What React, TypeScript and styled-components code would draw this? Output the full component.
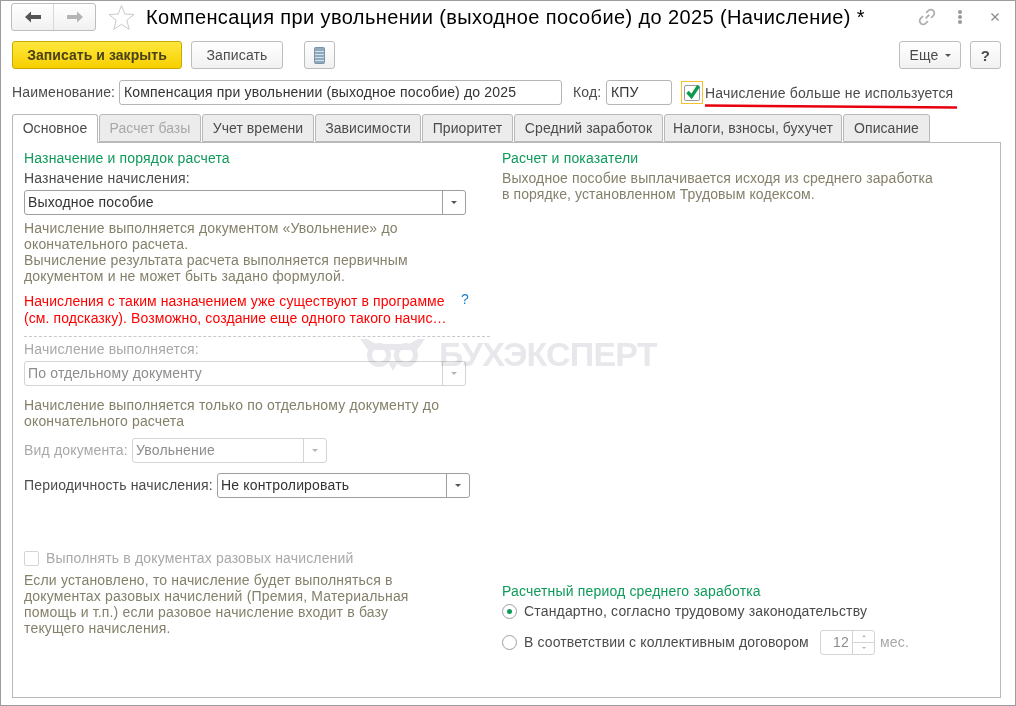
import React from "react";
import styled, { createGlobalStyle } from "styled-components";

const GlobalStyle = createGlobalStyle`
  html, body {
    margin: 0;
    padding: 0;
    background: #fff;
  }
  body {
    font-family: "Liberation Sans", Arial, sans-serif;
    font-size: 14px;
    letter-spacing: 0.17px;
    color: #4b4b4b;
  }
`;

const Window = styled.div`
  position: relative;
  box-sizing: border-box;
  width: 1016px;
  height: 706px;
  padding: 2px 13px 7px 10px;
  background: #fff;
  border: 1px solid #9c9c9c;
  overflow: hidden;
  display: flex;
  flex-direction: column;
`;

const TitleRow = styled.div`
  display: flex;
  align-items: center;
  height: 28px;
`;

const NavGroup = styled.div`
  display: flex;
  width: 85px;
  height: 28px;
  box-sizing: border-box;
  border: 1px solid #bdbdbd;
  border-radius: 3px;
  background: linear-gradient(#fff, #f1f1f1);
`;

const NavCell = styled.div<{ $divider?: boolean }>`
  flex: 1;
  display: flex;
  align-items: center;
  justify-content: center;
  border-left: ${({ $divider }) => ($divider ? "1px solid #d9d9d9" : "0")};
`;

const StarIcon = styled.svg`
  margin-left: 12px;
  flex: none;
`;

const Title = styled.h1`
  margin: 0 0 0 11px;
  flex: 1;
  font-size: 20px;
  font-weight: 400;
  letter-spacing: 0.39px;
  color: #000;
  white-space: nowrap;
  line-height: 28px;
`;

const WindowTools = styled.div`
  display: flex;
  align-items: center;
  padding-right: 2px;
`;

const LinkIcon = styled.svg`
  flex: none;
`;

const DotsIcon = styled.svg`
  flex: none;
  margin-left: 21px;
`;

const CloseIcon = styled.svg`
  flex: none;
  margin-left: 27px;
`;

const Toolbar = styled.div`
  display: flex;
  align-items: center;
  height: 28px;
  margin: 10px 1px 0 1px;
`;

const Button = styled.button<{ $width: number; $primary?: boolean; $gap?: number }>`
  box-sizing: border-box;
  width: ${({ $width }) => $width}px;
  height: 28px;
  margin-left: ${({ $gap }) => $gap ?? 0}px;
  padding: 0;
  display: flex;
  align-items: center;
  justify-content: center;
  gap: 6px;
  font-family: inherit;
  font-size: 14px;
  letter-spacing: ${({ $primary }) => ($primary ? "0.05px" : "0.17px")};
  font-weight: ${({ $primary }) => ($primary ? 700 : 400)};
  color: ${({ $primary }) => ($primary ? "#4a4218" : "#4b4b4b")};
  border: 1px solid ${({ $primary }) => ($primary ? "#c9a800" : "#bdbdbd")};
  border-radius: 3px;
  background: ${({ $primary }) =>
    $primary ? "linear-gradient(#ffe83d, #f7cf00)" : "linear-gradient(#fff, #f1f1f1)"};
`;

const Spacer = styled.div`
  flex: 1;
`;

const Caret = styled.span`
  width: 0;
  height: 0;
  border-left: 3px solid transparent;
  border-right: 3px solid transparent;
  border-top: 3px solid #555;
`;

const HelpMark = styled.span`
  font-weight: 700;
  font-size: 15px;
  color: #4b4b4b;
`;

const NameRow = styled.div`
  display: flex;
  align-items: center;
  height: 25px;
  margin: 11px 0 0 1px;
`;

const FieldLabel = styled.label<{ $muted?: boolean; $gap?: number; $width?: number }>`
  flex: none;
  width: ${({ $width }) => ($width ? `${$width}px` : "auto")};
  margin-left: ${({ $gap }) => $gap ?? 0}px;
  padding-bottom: 1px;
  white-space: nowrap;
  color: ${({ $muted }) => ($muted ? "#a8a8a8" : "#4b4b4b")};
`;

const TextBox = styled.div<{ $width: number }>`
  box-sizing: border-box;
  width: ${({ $width }) => $width}px;
  height: 25px;
  padding: 0 4px;
  line-height: 23px;
  color: #333;
  border: 1px solid #b5b5b5;
  border-radius: 3px;
  white-space: nowrap;
  overflow: hidden;
`;

const CheckFrame = styled.div`
  box-sizing: border-box;
  width: 22px;
  height: 23px;
  margin-left: 9px;
  display: flex;
  align-items: center;
  justify-content: center;
  border: 1px solid #f5c32c;
`;

const CheckBox = styled.div<{ $disabled?: boolean }>`
  position: relative;
  box-sizing: border-box;
  width: ${({ $disabled }) => ($disabled ? 15 : 16)}px;
  height: ${({ $disabled }) => ($disabled ? 15 : 16)}px;
  flex: none;
  background: #fff;
  border: 1px solid ${({ $disabled }) => ($disabled ? "#d4d4d4" : "#9a9a9a")};
  border-radius: 2px;
`;

const CheckMark = styled.svg`
  position: absolute;
  left: 0;
  top: -3px;
`;

const CheckLabel = styled.span`
  margin-left: 2px;
  white-space: nowrap;
`;

const RedUnderline = styled.svg`
  position: absolute;
  left: 703px;
  top: 103px;
`;

const Tabs = styled.div`
  display: flex;
  height: 29px;
  margin: 9px 0 0 1px;
  position: relative;
  z-index: 1;
  letter-spacing: 0.06px;
`;

const Tab = styled.div<{ $width: number; $active?: boolean; $muted?: boolean }>`
  box-sizing: border-box;
  width: ${({ $width }) => $width}px;
  height: ${({ $active }) => ($active ? 29 : 28)}px;
  margin-right: 1px;
  text-align: center;
  line-height: 26px;
  white-space: nowrap;
  color: ${({ $muted }) => ($muted ? "#a8a8a8" : "#4b4b4b")};
  background: ${({ $active }) => ($active ? "#fff" : "#ececec")};
  border: 1px solid #b9b9b9;
  border-bottom: ${({ $active }) => ($active ? "0" : "1px solid #b9b9b9")};
  border-radius: 3px 3px 0 0;
`;

const Panel = styled.div`
  box-sizing: border-box;
  flex: 1;
  margin: -1px 1px 0 1px;
  padding: 7px 11px 0;
  border: 1px solid #b9b9b9;
  display: grid;
  grid-template-columns: 478px 1fr;
`;

const Column = styled.div`
  display: flex;
  flex-direction: column;
`;

const Heading = styled.div`
  height: 16px;
  line-height: 16px;
  color: #0f9a5a;
  white-space: nowrap;
`;

const Line = styled.div<{ $top?: number; $muted?: boolean }>`
  height: 16px;
  line-height: 16px;
  margin-top: ${({ $top }) => $top ?? 0}px;
  white-space: nowrap;
  color: ${({ $muted }) => ($muted ? "#a8a8a8" : "#4b4b4b")};
`;

const Hint = styled.div<{ $top?: number; $tight?: boolean }>`
  margin-top: ${({ $top }) => $top ?? 0}px;
  line-height: 16px;
  white-space: pre-line;
  letter-spacing: ${({ $tight }) => ($tight ? "0.1px" : "0.17px")};
  color: #85806a;
`;

const Warning = styled.div`
  position: relative;
  margin-top: 9px;
  line-height: 17px;
  white-space: pre-line;
  letter-spacing: 0.09px;
  color: #f00;
`;

const HelpLink = styled.span`
  position: absolute;
  left: 437px;
  top: -2px;
  color: #1f7fc4;
`;

const Dashed = styled.div`
  width: 466px;
  height: 0;
  margin-top: 9px;
  border-top: 1px dashed #c9c9c9;
`;

const Combo = styled.div<{ $width: number; $disabled?: boolean; $top?: number }>`
  box-sizing: border-box;
  width: ${({ $width }) => $width}px;
  height: 25px;
  margin-top: ${({ $top }) => $top ?? 0}px;
  display: flex;
  color: ${({ $disabled }) => ($disabled ? "#8d8d8d" : "#333")};
  border: 1px solid ${({ $disabled }) => ($disabled ? "#d4d4d4" : "#9f9f9f")};
  border-radius: 3px;
`;

const ComboValue = styled.div`
  flex: 1;
  padding-left: 3px;
  line-height: 23px;
  white-space: nowrap;
`;

const ComboArrow = styled.div<{ $disabled?: boolean }>`
  width: 22px;
  display: flex;
  align-items: center;
  justify-content: center;
  border-left: 1px solid ${({ $disabled }) => ($disabled ? "#d4d4d4" : "#9f9f9f")};
  & > span {
    border-top-color: ${({ $disabled }) => ($disabled ? "#b5b5b5" : "#555")};
  }
`;

const FormRow = styled.div<{ $top?: number }>`
  display: flex;
  align-items: center;
  margin-top: ${({ $top }) => $top ?? 0}px;
`;

const RightBottom = styled.div`
  margin-top: 381px;
`;

const RadioRow = styled.div<{ $top?: number }>`
  display: flex;
  align-items: center;
  height: 24px;
  margin-top: ${({ $top }) => $top ?? 0}px;
`;

const Radio = styled.div<{ $checked?: boolean }>`
  box-sizing: border-box;
  width: 15px;
  height: 15px;
  margin-right: 7px;
  border: 1px solid #9f9f9f;
  border-radius: 50%;
  display: flex;
  align-items: center;
  justify-content: center;
  &::after {
    content: "";
    display: ${({ $checked }) => ($checked ? "block" : "none")};
    width: 5px;
    height: 5px;
    border-radius: 50%;
    background: #0f9a5a;
  }
`;

const RadioLabel = styled.span<{ $width?: number }>`
  flex: none;
  width: ${({ $width }) => ($width ? `${$width}px` : "auto")};
  white-space: nowrap;
  letter-spacing: ${({ $width }) => ($width ? "0.12px" : "0.17px")};
`;

const Spinner = styled.div`
  box-sizing: border-box;
  flex: none;
  width: 55px;
  height: 25px;
  display: flex;
  border: 1px solid #d4d4d4;
  border-radius: 3px;
  color: #8d8d8d;
`;

const SpinnerValue = styled.div`
  flex: 1;
  text-align: right;
  padding-right: 3px;
  line-height: 23px;
`;

const SpinnerButtons = styled.div`
  width: 21px;
  display: flex;
  flex-direction: column;
  border-left: 1px solid #d4d4d4;
`;

const SpinnerStep = styled.div<{ $down?: boolean }>`
  flex: 1;
  display: flex;
  align-items: center;
  justify-content: center;
  border-top: ${({ $down }) => ($down ? "1px solid #d4d4d4" : "0")};
  & > span {
    width: 0;
    height: 0;
    border-left: 2px solid transparent;
    border-right: 2px solid transparent;
    border-top: ${({ $down }) => ($down ? "2px solid #b5b5b5" : "0")};
    border-bottom: ${({ $down }) => ($down ? "0" : "2px solid #b5b5b5")};
  }
`;

const Watermark = styled.div`
  position: absolute;
  left: 359px;
  top: 334px;
  display: flex;
  align-items: center;
  gap: 13px;
  color: #e8e8ec;
  font-size: 34px;
  font-weight: 700;
  letter-spacing: -0.8px;
  pointer-events: none;
  mix-blend-mode: multiply;
`;

const tabs = [
  { label: "Основное", width: 86, active: true },
  { label: "Расчет базы", width: 102, muted: true },
  { label: "Учет времени", width: 112 },
  { label: "Зависимости", width: 106 },
  { label: "Приоритет", width: 91 },
  { label: "Средний заработок", width: 149 },
  { label: "Налоги, взносы, бухучет", width: 178 },
  { label: "Описание", width: 87 },
];

export default function App() {
  return (
    <Window>
      <GlobalStyle />
      <TitleRow>
        <NavGroup>
          <NavCell>
            <svg width="18" height="12" viewBox="0 0 18 12">
              <path d="M1 6 L7 0.5 V4 H17 V8 H7 V11.5 Z" fill="#555" />
            </svg>
          </NavCell>
          <NavCell $divider>
            <svg width="18" height="12" viewBox="0 0 18 12">
              <path d="M17 6 L11 0.5 V4 H1 V8 H11 V11.5 Z" fill="#b4b4b4" />
            </svg>
          </NavCell>
        </NavGroup>
        <StarIcon width="27" height="27" viewBox="0 0 27 27">
          <path
            d="M13.5 1.5 L16.8 10 L26 10.5 L18.8 16.3 L21.2 25.3 L13.5 20.3 L5.8 25.3 L8.2 16.3 L1 10.5 L10.2 10 Z"
            fill="#fff"
            stroke="#c9c9c9"
          />
        </StarIcon>
        <Title>Компенсация при увольнении (выходное пособие) до 2025 (Начисление) *</Title>
        <WindowTools>
          <LinkIcon width="18" height="18" viewBox="0 0 20 20" fill="none" stroke="#b0b0b0" strokeWidth="2">
            <path d="M8.5 11.5 L12.5 7.5" />
            <path d="M9 5.5 L11.5 3 A3.5 3.5 0 0 1 17 8.5 L14.5 11" />
            <path d="M11 14.5 L8.5 17 A3.5 3.5 0 0 1 3 11.5 L5.5 9" />
          </LinkIcon>
          <DotsIcon width="6" height="14" viewBox="0 0 6 14" fill="#9a9a9a">
            <circle cx="3" cy="2" r="2" />
            <circle cx="3" cy="7" r="2" />
            <circle cx="3" cy="12" r="2" />
          </DotsIcon>
          <CloseIcon width="10" height="10" viewBox="0 0 10 10" stroke="#8a8a8a" strokeWidth="1.2">
            <path d="M1.5 1.5 L8.5 8.5 M8.5 1.5 L1.5 8.5" />
          </CloseIcon>
        </WindowTools>
      </TitleRow>

      <Toolbar>
        <Button $primary $width={170}>Записать и закрыть</Button>
        <Button $width={92} $gap={9}>Записать</Button>
        <Button $width={31} $gap={21}>
          <svg width="11" height="17" viewBox="0 0 11 17">
            <rect x="0.5" y="0.5" width="10" height="16" rx="1" fill="#8fa9bf" stroke="#7b93a8" />
            <path d="M1 4.5 H10 M1 7.5 H10 M1 10.5 H10 M1 13.5 H10" stroke="#d6e0e8" />
          </svg>
        </Button>
        <Spacer />
        <Button $width={62}>
          Еще
          <Caret />
        </Button>
        <Button $width={31} $gap={9}>
          <HelpMark>?</HelpMark>
        </Button>
      </Toolbar>

      <NameRow>
        <FieldLabel $width={107}>Наименование:</FieldLabel>
        <TextBox $width={443}>Компенсация при увольнении (выходное пособие) до 2025</TextBox>
        <FieldLabel $gap={11} $width={33}>Код:</FieldLabel>
        <TextBox $width={66}>КПУ</TextBox>
        <CheckFrame>
          <CheckBox>
            <CheckMark width="16" height="17" viewBox="0 0 16 17">
              <path d="M2.5 9 L6.5 13.5 L13.5 3" fill="none" stroke="#0d9a50" strokeWidth="3.4" />
            </CheckMark>
          </CheckBox>
        </CheckFrame>
        <CheckLabel>Начисление больше не используется</CheckLabel>
      </NameRow>
      <RedUnderline width="254" height="6" viewBox="0 0 254 6">
        <path d="M1 1.5 L253 3.5" stroke="#e8000d" strokeWidth="2.4" fill="none" />
      </RedUnderline>

      <Tabs>
        {tabs.map((tab) => (
          <Tab key={tab.label} $width={tab.width} $active={tab.active} $muted={tab.muted}>
            {tab.label}
          </Tab>
        ))}
      </Tabs>

      <Panel>
        <Column>
          <Heading>Назначение и порядок расчета</Heading>
          <Line $top={4}>Назначение начисления:</Line>
          <Combo $width={442} $top={4}>
            <ComboValue>Выходное пособие</ComboValue>
            <ComboArrow><Caret /></ComboArrow>
          </Combo>
          <Hint $top={5}>
            {"Начисление выполняется документом «Увольнение» до\nокончательного расчета.\nВычисление результата расчета выполняется первичным\nдокументом и не может быть задано формулой."}
          </Hint>
          <Warning>
            {"Начисления с таким назначением уже существуют в программе\n(см. подсказку). Возможно, создание еще одного такого начис…"}
            <HelpLink>?</HelpLink>
          </Warning>
          <Dashed />
          <Line $top={4} $muted>Начисление выполняется:</Line>
          <Combo $width={442} $top={4} $disabled>
            <ComboValue>По отдельному документу</ComboValue>
            <ComboArrow $disabled><Caret /></ComboArrow>
          </Combo>
          <Hint $top={11}>
            {"Начисление выполняется только по отдельному документу до\nокончательного расчета"}
          </Hint>
          <FormRow $top={9}>
            <FieldLabel $muted $width={108}>Вид документа:</FieldLabel>
            <Combo $width={195} $disabled>
              <ComboValue>Увольнение</ComboValue>
              <ComboArrow $disabled><Caret /></ComboArrow>
            </Combo>
          </FormRow>
          <FormRow $top={10}>
            <FieldLabel $width={193}>Периодичность начисления:</FieldLabel>
            <Combo $width={253}>
              <ComboValue>Не контролировать</ComboValue>
              <ComboArrow><Caret /></ComboArrow>
            </Combo>
          </FormRow>
          <FormRow $top={52}>
            <CheckBox $disabled />
            <FieldLabel $muted $gap={7}>Выполнять в документах разовых начислений</FieldLabel>
          </FormRow>
          <Hint $top={5}>
            {"Если установлено, то начисление будет выполняться в\nдокументах разовых начислений (Премия, Материальная\nпомощь и т.п.) если разовое начисление входит в базу\nтекущего начисления."}
          </Hint>
        </Column>
        <Column>
          <Heading>Расчет и показатели</Heading>
          <Hint $top={4} $tight>
            {"Выходное пособие выплачивается исходя из среднего заработка\nв порядке, установленном Трудовым кодексом."}
          </Hint>
          <RightBottom>
            <Heading>Расчетный период среднего заработка</Heading>
            <RadioRow $top={0}>
              <Radio $checked />
              <RadioLabel>Стандартно, согласно трудовому законодательству</RadioLabel>
            </RadioRow>
            <RadioRow $top={7}>
              <Radio />
              <RadioLabel $width={296}>В соответствии с коллективным договором</RadioLabel>
              <Spinner>
                <SpinnerValue>12</SpinnerValue>
                <SpinnerButtons>
                  <SpinnerStep><span /></SpinnerStep>
                  <SpinnerStep $down><span /></SpinnerStep>
                </SpinnerButtons>
              </Spinner>
              <FieldLabel $muted $gap={5}>мес.</FieldLabel>
            </RadioRow>
          </RightBottom>
        </Column>
      </Panel>

      <Watermark>
        <svg width="66" height="34" viewBox="0 0 66 34" fill="none" stroke="#e8e8ec">
          <circle cx="19" cy="17" r="9.5" strokeWidth="5" />
          <circle cx="46" cy="17" r="9.5" strokeWidth="5" />
          <path d="M0 1 H7 L16 6 H49 L58 1 H65 L57 12 H8 Z" fill="#e8e8ec" stroke="none" />
          <path d="M28 24 H38 L33 33 Z" fill="#e8e8ec" stroke="none" />
        </svg>
        БУХЭКСПЕРТ
      </Watermark>
    </Window>
  );
}
